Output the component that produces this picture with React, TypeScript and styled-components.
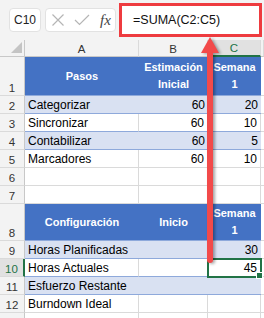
import React from 'react';
import styled, { createGlobalStyle, css } from 'styled-components';

const Global = createGlobalStyle`
  html, body { margin: 0; padding: 0; background: #ffffff; overflow: hidden; }
  body { font-family: "Liberation Sans", Arial, sans-serif; }
  * { box-sizing: border-box; }
`;

const GREEN = '#217346';
const BLUE = '#4472C4';
const BAND = '#D9E1F2';
const BLUE_LINE = '#8EA9DB';
const GRID = '#dadada';
const HEAD_BG = '#f3f3f3';

const Page = styled.div`
  position: relative;
  width: 264px;
  height: 318px;
  overflow: hidden;
  background: #fff;
`;

const FormulaBar = styled.div`
  height: 40px;
  display: flex;
  align-items: center;
  padding-left: 9px;
  background: ${HEAD_BG};
`;

const NameBox = styled.div`
  width: 32px;
  height: 24px;
  background: #fff;
  border: 1px solid #e2e2e2;
  border-radius: 4px;
  display: flex;
  align-items: center;
  justify-content: center;
  font-size: 12px;
  color: #222;
`;

const IconBox = styled.div`
  margin-left: 4px;
  width: 71px;
  height: 24px;
  background: #fff;
  border: 1px solid #e2e2e2;
  border-radius: 4px;
  display: flex;
  align-items: center;
  padding-left: 5px;
  gap: 9px;
`;

const Fx = styled.span`
  font-family: "Liberation Serif", "Times New Roman", serif;
  font-style: italic;
  font-size: 15px;
  color: #444;
  margin-left: 1px;
`;

const FormulaInput = styled.div`
  margin-left: 3px;
  width: 143px;
  height: 34px;
  background: #fff;
  border: 3px solid #ee3b3f;
  display: flex;
  align-items: center;
  padding-left: 11px;
  font-size: 12.5px;
  color: #111;
`;

const Sheet = styled.div`
  display: flex;
  flex-direction: column;
`;

const Row = styled.div<{ $h: number }>`
  display: grid;
  grid-template-columns: 25px 114px 69px 53px 1fr;
  height: ${(p) => p.$h}px;
`;

const Corner = styled.div`
  position: relative;
  background: ${HEAD_BG};
  border-right: 1px solid #c8c8c8;
  border-bottom: 1px solid #c8c8c8;
  &::after {
    content: '';
    position: absolute;
    right: 2px;
    bottom: 3px;
    width: 0;
    height: 0;
    border-left: 11px solid transparent;
    border-bottom: 11px solid #c4c4c4;
  }
`;

const ColHead = styled.div<{ $sel?: boolean }>`
  background: ${(p) => (p.$sel ? '#e1e1e1' : HEAD_BG)};
  color: ${(p) => (p.$sel ? GREEN : '#333')};
  border-right: 1px solid ${GRID};
  border-bottom: ${(p) => (p.$sel ? `2px solid ${GREEN}` : '1px solid #c8c8c8')};
  font-size: 11.5px;
  display: flex;
  align-items: center;
  justify-content: center;
  padding-top: 1px;
`;

const RowHead = styled.div<{ $sel?: boolean }>`
  background: ${(p) => (p.$sel ? '#e1e1e1' : HEAD_BG)};
  color: ${(p) => (p.$sel ? GREEN : '#333')};
  border-right: ${(p) => (p.$sel ? `2px solid ${GREEN}` : '1px solid #c8c8c8')};
  border-bottom: 1px solid ${GRID};
  font-size: 11.5px;
  display: flex;
  align-items: flex-end;
  justify-content: center;
  padding-bottom: 1px;
`;

type Kind = 'head' | 'band' | 'plain' | 'last' | 'empty';

const Cell = styled.div<{ $kind: Kind; $num?: boolean; $sel?: boolean }>`
  position: relative;
  display: flex;
  align-items: flex-end;
  justify-content: ${(p) => (p.$num ? 'flex-end' : 'flex-start')};
  padding: 0 3px 1px 3px;
  font-size: 12px;
  color: #000;
  white-space: nowrap;
  ${(p) => {
    switch (p.$kind) {
      case 'head':
        return css`
          background: ${BLUE};
          border-bottom: 1px solid ${BLUE_LINE};
          color: #fff;
          font-weight: bold;
          font-size: 11px;
          line-height: 17px;
          align-items: center;
          justify-content: center;
          text-align: center;
          white-space: pre-line;
          padding: 0;
        `;
      case 'band':
        return css`
          background: ${BAND};
          border-bottom: 1px solid ${BLUE_LINE};
        `;
      case 'plain':
        return css`
          background: #fff;
          border-right: 1px solid ${GRID};
          border-bottom: 1px solid ${BLUE_LINE};
        `;
      default:
        return css`
          background: #fff;
          border-right: 1px solid ${GRID};
          border-bottom: 1px solid ${GRID};
        `;
    }
  }}
  ${(p) =>
    p.$sel &&
    css`
      outline: 2px solid ${GREEN};
      outline-offset: -1px;
      z-index: 1;
      &::after {
        content: '';
        position: absolute;
        right: -3px;
        bottom: -3px;
        width: 5px;
        height: 5px;
        background: ${GREEN};
        border: 1px solid #fff;
      }
    `}
`;

const Arrow = styled.svg`
  position: absolute;
  left: 198px;
  top: 36px;
  overflow: visible;
  filter: drop-shadow(2px 1px 1.5px rgba(0, 0, 0, 0.35));
  z-index: 5;
`;

type RowDef = {
  n: number;
  h: number;
  kind: Kind;
  label?: boolean;
  cells: [string, string, string];
};

const rows: RowDef[] = [
  { n: 1, h: 39, kind: 'head', cells: ['Pasos', 'Estimación\nInicial', 'Semana\n1'] },
  { n: 2, h: 18, kind: 'band', cells: ['Categorizar', '60', '20'] },
  { n: 3, h: 18, kind: 'plain', cells: ['Sincronizar', '60', '10'] },
  { n: 4, h: 18, kind: 'band', cells: ['Contabilizar', '60', '5'] },
  { n: 5, h: 18, kind: 'last', cells: ['Marcadores', '60', '10'] },
  { n: 6, h: 18, kind: 'empty', cells: ['', '', ''] },
  { n: 7, h: 18, kind: 'empty', cells: ['', '', ''] },
  { n: 8, h: 37, kind: 'head', cells: ['Configuración', 'Inicio', 'Semana\n1'] },
  { n: 9, h: 18, kind: 'band', cells: ['Horas Planificadas', '', '30'] },
  { n: 10, h: 18, kind: 'plain', cells: ['Horas Actuales', '', '45'] },
  { n: 11, h: 18, kind: 'band', cells: ['Esfuerzo Restante', '', ''] },
  { n: 12, h: 18, kind: 'last', cells: ['Burndown Ideal', '', ''] },
  { n: 13, h: 18, kind: 'empty', label: false, cells: ['', '', ''] },
];

export default function App() {
  return (
    <Page>
      <Global />
      <FormulaBar>
        <NameBox>C10</NameBox>
        <IconBox>
          <svg width="14" height="14" viewBox="0 0 14 14">
            <path d="M1.5 1.5 L12.5 12.5 M12.5 1.5 L1.5 12.5" stroke="#b5b5b5" strokeWidth="1.2" fill="none" />
          </svg>
          <svg width="16" height="12" viewBox="0 0 16 12">
            <path d="M1 6 L5.5 10.5 L15 1" stroke="#b5b5b5" strokeWidth="1.2" fill="none" />
          </svg>
          <Fx>fx</Fx>
        </IconBox>
        <FormulaInput>=SUMA(C2:C5)</FormulaInput>
      </FormulaBar>
      <Sheet>
        <Row $h={17}>
          <Corner />
          <ColHead>A</ColHead>
          <ColHead>B</ColHead>
          <ColHead $sel>C</ColHead>
          <ColHead />
        </Row>
        {rows.map((r) => (
          <Row key={r.n} $h={r.h}>
            <RowHead $sel={r.n === 10}>{r.label === false ? '' : r.n}</RowHead>
            <Cell $kind={r.kind}>{r.cells[0]}</Cell>
            <Cell $kind={r.kind} $num>{r.cells[1]}</Cell>
            <Cell $kind={r.kind} $num $sel={r.n === 10}>{r.cells[2]}</Cell>
            <Cell $kind="empty" />
          </Row>
        ))}
      </Sheet>
      <Arrow width="24" height="230" viewBox="0 0 24 230">
        <polygon points="12,1 3,17 21,17" fill="#f24a4a" />
        <rect x="9" y="14" width="6" height="213" rx="3" fill="#f24a4a" />
      </Arrow>
    </Page>
  );
}
